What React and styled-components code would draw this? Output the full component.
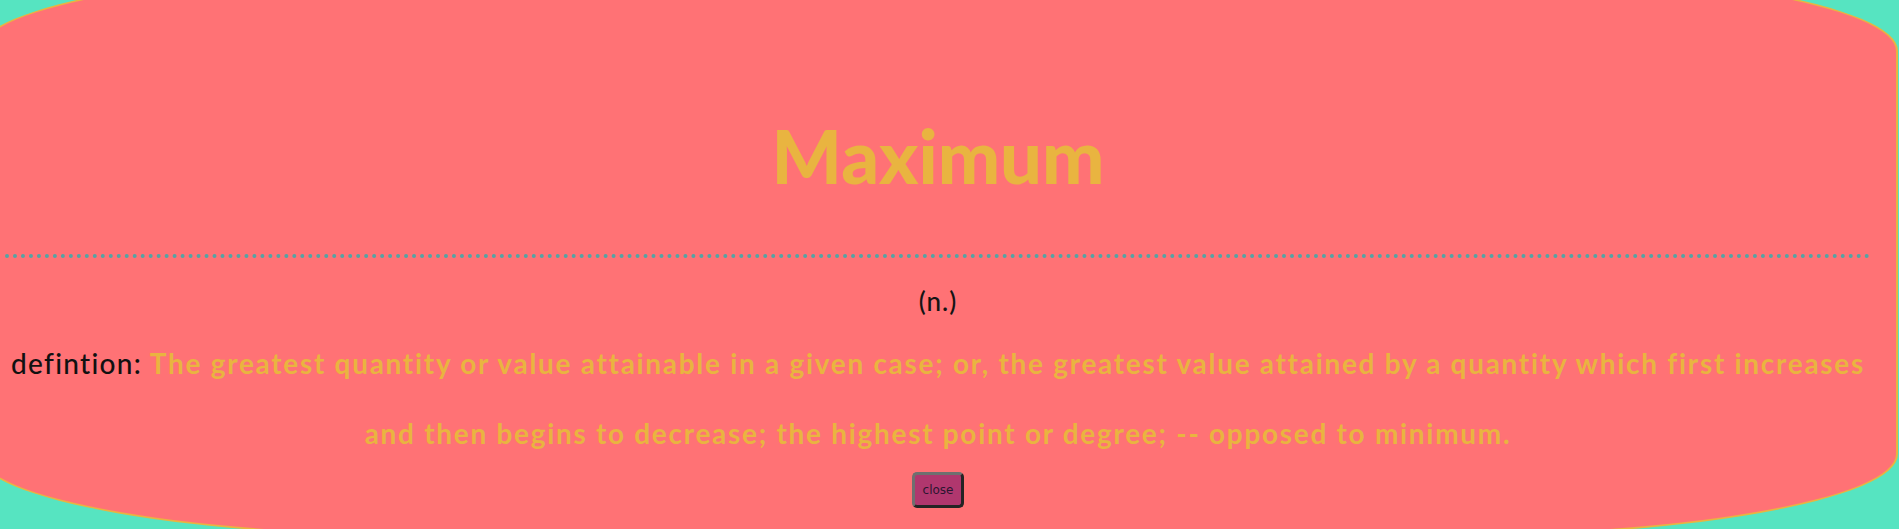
import styled, { createGlobalStyle } from "styled-components";

const GlobalStyle = createGlobalStyle`
  html {
    overflow: hidden;
    background-color: #56e4c1;
  }
  body {
    margin: 0;
    padding: 0;
    font-family: "Lato", "Liberation Sans", sans-serif;
  }
`;

const Page = styled.main`
  display: block;
`;

const Card = styled.section`
  box-sizing: border-box;
  width: 1920px;
  height: 571px;
  margin: -33px 0 0 -22px;
  padding: 150px 25px 0;
  background-color: #ff7275;
  border: 2.5px solid #e9b440;
  border-radius: 480px / 84px;
  display: flex;
  flex-direction: column;
  align-items: center;
`;

const Word = styled.h1`
  margin: 0;
  font-family: "Lato", sans-serif;
  font-weight: 900;
  font-size: 74px;
  line-height: 74px;
  color: #e9b440;
`;

const Divider = styled.hr`
  align-self: stretch;
  margin: 61px 0 0;
  border: none;
  border-top: 4px dotted #54a3a4;
  height: 0;
`;

const PartOfSpeech = styled.p`
  margin: 28px 0 0;
  font-size: 26px;
  font-weight: 500;
  letter-spacing: 1px;
  line-height: 30px;
  color: #141414;
`;

const Definition = styled.p`
  margin: 12px 0 0;
  font-size: 28px;
  font-weight: 700;
  letter-spacing: 1.7px;
  line-height: 70px;
  text-align: center;
  color: #e9b440;

  b {
    font-weight: 500;
    letter-spacing: 1.3px;
    color: #111;
  }
`;

const CloseButton = styled.button`
  margin-top: 4px;
  width: 52px;
  height: 36px;
  padding: 0;
  background-color: #b0376e;
  border: 3px solid;
  border-color: #6f6f6f #242424 #242424 #6f6f6f;
  border-radius: 5px;
  font-family: "DejaVu Sans", sans-serif;
  font-size: 12px;
  color: #2b1530;
  cursor: pointer;
`;

export default function App() {
  return (
    <Page>
      <GlobalStyle />
      <Card>
        <Word>Maximum</Word>
        <Divider />
        <PartOfSpeech>(n.)</PartOfSpeech>
        <Definition>
          <b>defintion:</b>{" "}
          The greatest quantity or value attainable in a given case; or, the
          greatest value attained by a quantity which first increases and then
          begins to decrease; the highest point or degree; -- opposed to
          minimum.
        </Definition>
        <CloseButton>close</CloseButton>
      </Card>
    </Page>
  );
}
